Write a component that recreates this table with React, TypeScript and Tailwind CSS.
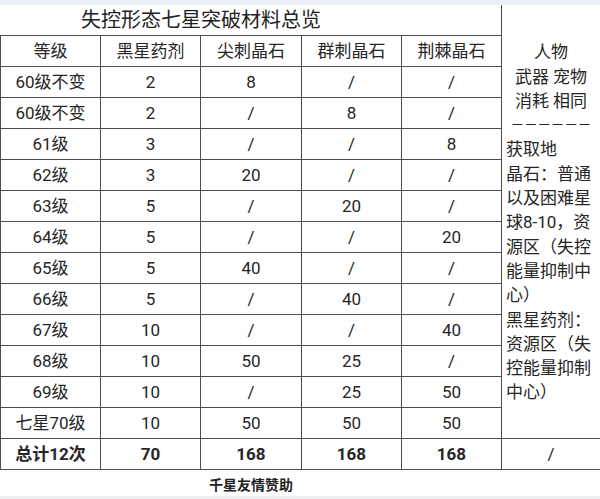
import React from "react";

const rows: string[][] = [
  ["60级不变", "2", "8", "/", "/"],
  ["60级不变", "2", "/", "8", "/"],
  ["61级", "3", "/", "/", "8"],
  ["62级", "3", "20", "/", "/"],
  ["63级", "5", "/", "20", "/"],
  ["64级", "5", "/", "/", "20"],
  ["65级", "5", "40", "/", "/"],
  ["66级", "5", "/", "40", "/"],
  ["67级", "10", "/", "/", "40"],
  ["68级", "10", "50", "25", "/"],
  ["69级", "10", "/", "25", "50"],
  ["七星70级", "10", "50", "50", "50"],
];

const header = ["等级", "黑星药剂", "尖刺晶石", "群刺晶石", "荆棘晶石"];
const total = ["总计12次", "70", "168", "168", "168"];

function Cell({ text, first, bold }: { text: string; first?: boolean; bold?: boolean }) {
  return (
    <div
      className={
        "flex items-center justify-center border-b border-r border-[#4d4d4d] text-[17px] leading-none text-[#262626] " +
        (first ? "border-l " : "") +
        (bold ? "font-bold" : "")
      }
    >
      {text}
    </div>
  );
}

export default function App() {
  return (
    <div
      className="w-[600px] h-[499px] bg-white flex flex-col overflow-hidden"
      style={{ fontFamily: '"Roboto", "Noto Sans CJK SC", sans-serif' }}
    >
      <div className="h-[5px] bg-[#eceff3]" />
      <div className="grid grid-cols-[101px_100px_101px_100px_100px_98px] auto-rows-[31px]">
        <div className="col-start-1 col-span-5 row-start-1 border-b border-r border-[#4d4d4d] flex items-center">
          <div className="w-[402px] text-center text-[20px] leading-none text-[#222]">
            失控形态七星突破材料总览
          </div>
        </div>
        <div className="col-start-6 row-start-1 row-span-14 border-b border-[#4d4d4d] flex flex-col justify-center text-[17px] leading-[24.3px] text-[#262626] pt-[2px]">
          <div className="text-center">人物</div>
          <div className="text-center">武器 宠物</div>
          <div className="text-center">消耗 相同</div>
          <div className="text-center text-[13.4px] tracking-[0px]">－－－－－－</div>
          <div className="pl-[4px] whitespace-nowrap">获取地</div>
          <div className="pl-[4px] whitespace-nowrap">晶石：普通</div>
          <div className="pl-[4px] whitespace-nowrap">以及困难星</div>
          <div className="pl-[4px] whitespace-nowrap">球8-10，资</div>
          <div className="pl-[4px] whitespace-nowrap">源区（失控</div>
          <div className="pl-[4px] whitespace-nowrap">能量抑制中</div>
          <div className="pl-[4px] whitespace-nowrap">心）</div>
          <div className="pl-[4px] whitespace-nowrap">黑星药剂：</div>
          <div className="pl-[4px] whitespace-nowrap">资源区（失</div>
          <div className="pl-[4px] whitespace-nowrap">控能量抑制</div>
          <div className="pl-[4px] whitespace-nowrap">中心）</div>
        </div>
        {header.map((h, i) => (
          <Cell key={"h" + i} text={h} first={i === 0} />
        ))}
        {rows.map((r, ri) =>
          r.map((c, ci) => <Cell key={ri + "-" + ci} text={c} first={ci === 0} />)
        )}
        {total.map((t, i) => (
          <Cell key={"t" + i} text={t} first={i === 0} bold />
        ))}
        <div className="flex items-center justify-center border-b border-[#4d4d4d] text-[17px] leading-none text-[#262626]">
          /
        </div>
      </div>
      <div className="flex-1 flex">
        <div className="w-[502px] pt-[4px] flex items-center justify-center text-[14px] font-bold text-[#222] leading-none">
          千星友情赞助
        </div>
      </div>
      <div className="h-[3px] bg-[#eceff3]" />
    </div>
  );
}
